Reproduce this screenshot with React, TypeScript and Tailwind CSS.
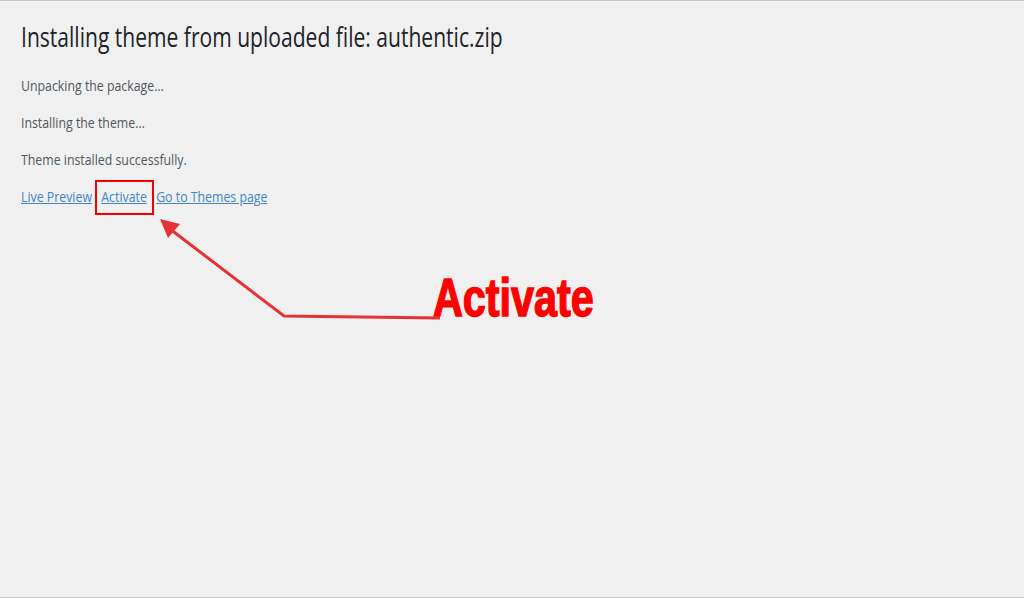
import React from "react";

export default function App() {
  return (
    <div className="relative w-[1024px] h-[598px] overflow-hidden bg-[#f0f0f0] border-t border-b border-[#c8c8c8]" style={{ fontFamily: '"Open Sans", "Noto Sans", sans-serif' }}>
      <div className="pl-[21px] pt-[15px]">
        <h1 className="inline-block origin-left scale-x-[0.78] whitespace-nowrap text-[27px] leading-[42px] text-[#1d2327] font-normal">
          Installing theme from uploaded file: authentic.zip
        </h1>
        <div className="mt-[17px] flex flex-col gap-[16px] origin-left scale-x-[0.85] text-[14.5px] leading-[21px] text-[#50575e]">
          <p>Unpacking the package&hellip;</p>
          <p>Installing the theme&hellip;</p>
          <p>Theme installed successfully.</p>
          <p className="flex gap-[11px] text-[#3f87c5]">
            <a href="#" className="underline">Live Preview</a>
            <a href="#" className="underline">Activate</a>
            <a href="#" className="underline">Go to Themes page</a>
          </p>
        </div>
      </div>

      <div className="absolute left-[95px] top-[179px] w-[59px] h-[35px] border-2 border-[#f00000]" />

      <svg className="absolute left-0 top-0" width="1024" height="598" viewBox="0 0 1024 598">
        <polyline points="440,317 284,315 170,228" fill="none" stroke="#e63232" strokeWidth="3" strokeLinejoin="miter" />
        <polygon points="160,218 180,223 168,237" fill="#e63232" />
      </svg>

      <span
        className="absolute left-[433px] top-[265px] inline-block origin-left scale-x-[0.78] text-[53px] leading-[64px] font-bold text-[#ff0000] [-webkit-text-stroke:1.5px_#ff0000]"
        style={{ fontFamily: '"Liberation Sans", Arial, sans-serif' }}
      >
        Activate
      </span>
    </div>
  );
}
